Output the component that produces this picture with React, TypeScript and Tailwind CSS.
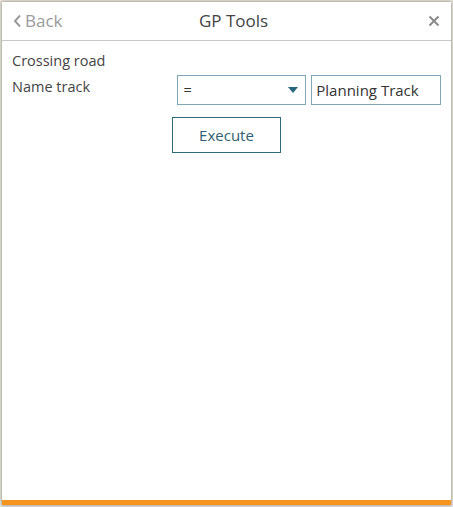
import React from "react";

const font = { fontFamily: '"Open Sans", "Liberation Sans", sans-serif' };

const GpToolsPanel = () => (
  <div className="flex h-full flex-col bg-white shadow-[0_0_3px_rgba(0,0,0,0.45)]">
    <div className="flex h-[39px] items-center border-b border-[#c8c8c8] px-[11px]">
      <div className="w-[186px]">
        <button className="flex items-center gap-[3px] text-[17px] text-[#9a9a9a]">
          <svg width="9" height="14" viewBox="0 0 9 14" fill="none">
            <path d="M7 1.5 L2 7 L7 12.5" stroke="#9a9a9a" strokeWidth="2" />
          </svg>
          Back
        </button>
      </div>
      <span className="text-[17px] text-[#444]">GP Tools</span>
      <svg width="12" height="12" viewBox="0 0 12 12" className="ml-auto">
        <path d="M1.5 1.5 L10.5 10.5 M10.5 1.5 L1.5 10.5" stroke="#8a8a8a" strokeWidth="2" />
      </svg>
    </div>

    <div className="flex-1 px-[10px] pt-[10px] text-[14.5px] text-[#444]">
      <div className="leading-[20px]">Crossing road</div>
      <div className="mt-[4px] flex items-start">
        <div className="w-[165px] pt-[2px] leading-[20px]">Name track</div>
        <div className="flex h-[30px] w-[130px] items-center justify-between border border-[#7fa7b5] pl-[6px] pr-[7px] text-[#333]">
          <span>=</span>
          <svg width="10" height="7" viewBox="0 0 10 7">
            <path d="M0 0 L10 0 L5 6 Z" fill="#25667c" />
          </svg>
        </div>
        <div className="ml-[5px] flex h-[30px] w-[130px] items-center border border-[#7fa7b5] px-[4px] text-[15px] text-[#333]">
          Planning Track
        </div>
      </div>
      <div className="mt-[12px] flex justify-center">
        <button className="h-[36px] w-[109px] border border-[#2d6a7e] text-[15px] text-[#2d5f70]">
          Execute
        </button>
      </div>
    </div>

    <div className="h-[5px] bg-[#f7941d]" />
  </div>
);

export default function App() {
  return (
    <div className="h-[507px] w-[453px] bg-[#e6e2d8] p-[2px]" style={font}>
      <GpToolsPanel />
    </div>
  );
}
